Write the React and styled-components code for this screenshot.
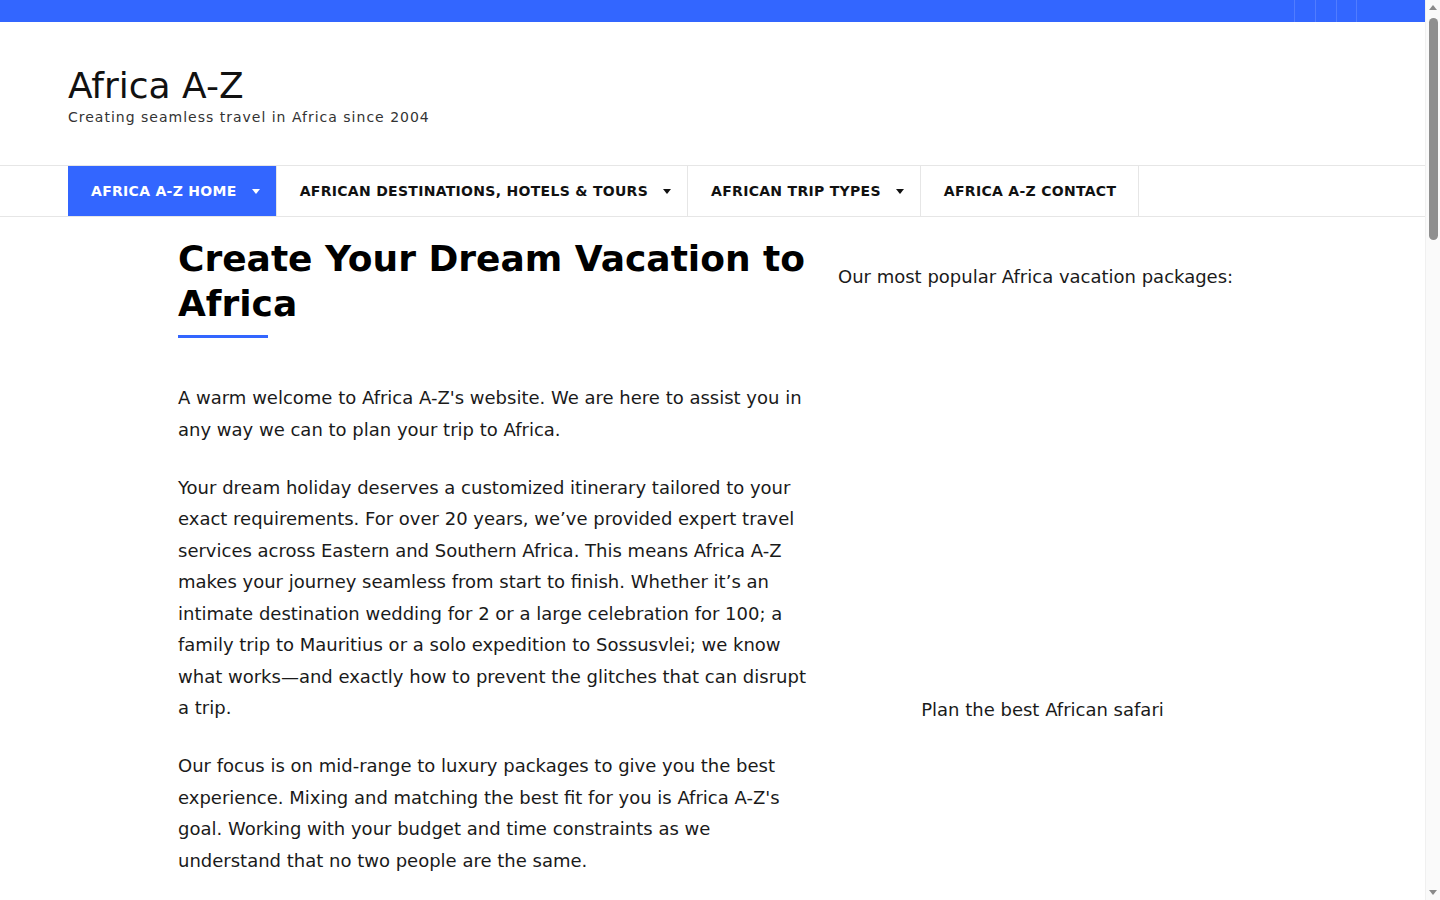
import React from 'react';
import styled, { createGlobalStyle } from 'styled-components';

const GlobalStyle = createGlobalStyle`
    * {
        box-sizing: border-box;
    }
    body {
        margin: 0 15px 0 0;
        font-family: "DejaVu Sans", sans-serif;
        color: #1e1e1e;
        background: #fff;
    }
`;

const Page = styled.div`
    min-height: 3500px;
`;

/* window scrollbar drawn over the right edge */
const Scrollbar = styled.div`
    position: fixed;
    top: 0;
    right: 0;
    width: 15px;
    height: 100vh;
    background: #fafafa;
    border-left: 1px solid #f0f0f0;
`;

const Thumb = styled.div`
    position: absolute;
    top: 18px;
    left: 3px;
    width: 9px;
    height: 222px;
    border-radius: 5px;
    background: #8f8f8f;
`;

const Arrow = styled.div`
    position: absolute;
    left: 3px;
    ${(p) => (p.$down ? 'bottom: 5px;' : 'top: 5px;')}
    width: 0;
    height: 0;
    border-left: 4.5px solid transparent;
    border-right: 4.5px solid transparent;
    ${(p) => (p.$down ? 'border-top: 5px solid #8a8a8a;' : 'border-bottom: 5px solid #8a8a8a;')}
`;

const TopBar = styled.div`
    height: 22px;
    background: #3366ff;
    display: flex;
    justify-content: flex-end;
    padding: 0 68px;
`;

const Social = styled.a`
    width: 21px;
    height: 22px;
    border-left: 1px solid rgba(255, 255, 255, 0.15);
    &:last-child {
        border-right: 1px solid rgba(255, 255, 255, 0.15);
    }
`;

const Header = styled.header`
    height: 143px;
    padding: 43px 68px 0;
`;

const SiteTitle = styled.h1`
    margin: 0;
    font-size: 36px;
    font-weight: 400;
    line-height: 42px;
    color: #111;
`;

const Tagline = styled.p`
    margin: 0;
    font-size: 14px;
    letter-spacing: 1px;
    line-height: 20px;
    color: #333;
`;

const NavBar = styled.nav`
    border-top: 1px solid #e6e6e6;
    border-bottom: 1px solid #e6e6e6;
    padding: 0 68px;
    display: flex;
`;

const NavItem = styled.a`
    display: flex;
    align-items: center;
    height: 50px;
    padding: ${(p) => (p.$drop ? '0 16px 0 23px' : '0 22px 0 23px')};
    border-right: 1px solid #e6e6e6;
    background: ${(p) => (p.$active ? '#3366ff' : 'transparent')};
    color: ${(p) => (p.$active ? '#fff' : '#111')};
    font-size: 14px;
    font-weight: 700;
    letter-spacing: 0.3px;
    text-transform: uppercase;
    white-space: nowrap;
`;

const Caret = styled.span`
    margin-left: 15px;
    width: 0;
    height: 0;
    border-left: 4px solid transparent;
    border-right: 4px solid transparent;
    border-top: 5px solid currentColor;
`;

const Main = styled.main`
    width: 1069px;
    margin: 0 auto;
    padding-top: 19px;
    display: grid;
    grid-template-columns: 630px 409px;
    gap: 30px;
`;

const Title = styled.h2`
    margin: 0;
    font-size: 36px;
    line-height: 45px;
    font-weight: 700;
    color: #000;
    &::after {
        content: '';
        display: block;
        width: 90px;
        height: 3px;
        margin-top: 9px;
        background: #3366ff;
    }
`;

const Text = styled.p`
    margin: 44px 0 0;
    font-size: 18px;
    line-height: 31.5px;
    color: #1a1a1a;
    & + & {
        margin-top: 26.5px;
    }
`;

const Sidebar = styled.aside`
    padding-top: 30px;
    font-size: 18px;
    line-height: 22px;
    color: #1a1a1a;
`;

const SidebarLead = styled.p`
    margin: 0;
`;

const PackageImage = styled.div`
    height: 411px;
`;

const Caption = styled.p`
    margin: 0;
    text-align: center;
`;

const menu = [
    { label: 'Africa A-Z Home', drop: true, active: true },
    { label: 'African Destinations, Hotels & Tours', drop: true },
    { label: 'African Trip Types', drop: true },
    { label: 'Africa A-Z Contact' },
];

export default function App() {
    return (
        <Page>
            <GlobalStyle />
            <TopBar>
                <Social />
                <Social />
                <Social />
            </TopBar>
            <Header>
                <SiteTitle>Africa A-Z</SiteTitle>
                <Tagline>Creating seamless travel in Africa since 2004</Tagline>
            </Header>
            <NavBar>
                {menu.map((m) => (
                    <NavItem key={m.label} $active={m.active} $drop={m.drop}>
                        {m.label}
                        {m.drop && <Caret />}
                    </NavItem>
                ))}
            </NavBar>
            <Main>
                <article>
                    <Title>Create Your Dream Vacation to Africa</Title>
                    <Text>
                        A warm welcome to Africa A-Z's website. We are here to assist you in any way we can to plan your trip to Africa.
                    </Text>
                    <Text>
                        Your dream holiday deserves a customized itinerary tailored to your exact requirements. For over 20 years, we’ve provided expert travel services across Eastern and Southern Africa. This means Africa A-Z makes your journey seamless from start to finish. Whether it’s an intimate destination wedding for 2 or a large celebration for 100; a family trip to Mauritius or a solo expedition to Sossusvlei; we know what works—and exactly how to prevent the glitches that can disrupt a trip.
                    </Text>
                    <Text>
                        Our focus is on mid-range to luxury packages to give you the best experience. Mixing and matching the best fit for you is Africa A-Z's goal. Working with your budget and time constraints as we understand that no two people are the same.
                    </Text>
                </article>
                <Sidebar>
                    <SidebarLead>Our most popular Africa vacation packages:</SidebarLead>
                    <PackageImage />
                    <Caption>Plan the best African safari</Caption>
                </Sidebar>
            </Main>
            <Scrollbar>
                <Arrow />
                <Thumb />
                <Arrow $down />
            </Scrollbar>
        </Page>
    );
}
